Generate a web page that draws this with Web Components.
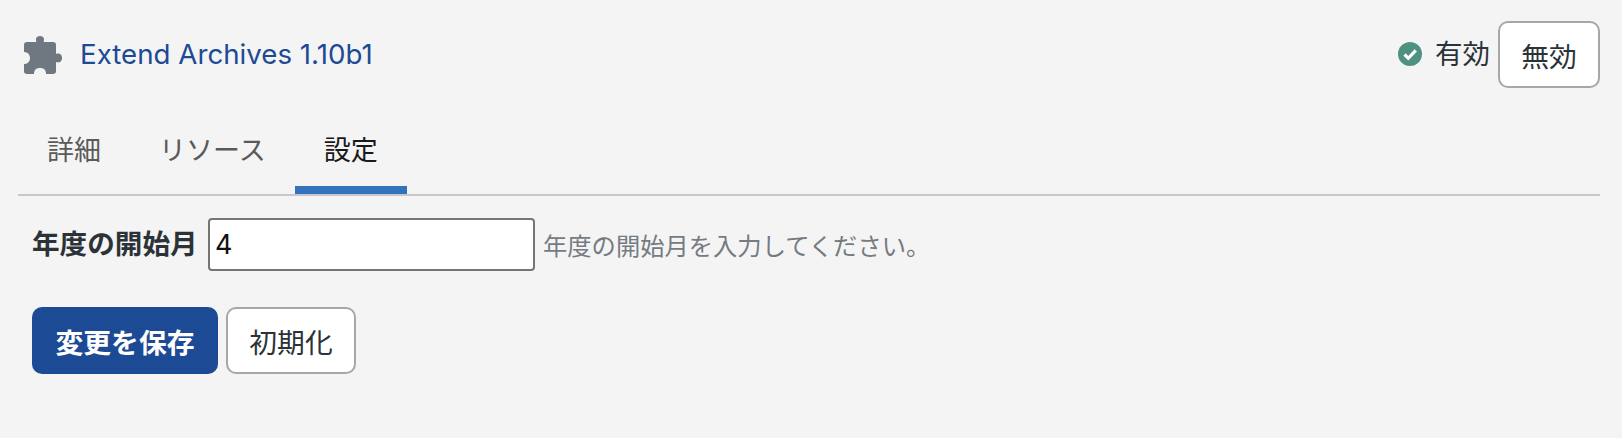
<!DOCTYPE html>
<html lang="ja">
<head>
<meta charset="utf-8">
<title>Extend Archives</title>
<style>
html,body{margin:0;padding:0;background:#f4f4f4;}
body{font-family:Inter,"Noto Sans CJK JP",sans-serif;font-size:27px;color:#2c3338;}
</style>
</head>
<body>
<plugin-page>
  <plugin-header slot="header" name="Extend Archives 1.10b1" status="有効" action="無効"></plugin-header>
  <plugin-tabs slot="tabs">
    <plugin-tab>詳細</plugin-tab>
    <plugin-tab>リソース</plugin-tab>
    <plugin-tab active>設定</plugin-tab>
  </plugin-tabs>
  <plugin-field slot="form" label="年度の開始月" value="4" hint="年度の開始月を入力してください。"></plugin-field>
  <div slot="actions" style="display:flex;gap:8px">
    <wp-button primary>変更を保存</wp-button>
    <wp-button style="width:130px">初期化</wp-button>
  </div>
</plugin-page>
<script>
class Base extends HTMLElement{
  render(html){ if(!this.shadowRoot) this.attachShadow({mode:'open'}); this.shadowRoot.innerHTML=html; }
}
customElements.define('wp-button',class extends Base{
  connectedCallback(){
    const p=this.hasAttribute('primary');
    this.render(`<style>
      :host{display:inline-flex;box-sizing:border-box;height:67px;${p?'width:186px;':''}}
      button{all:unset;box-sizing:border-box;width:100%;height:100%;display:flex;align-items:center;justify-content:center;
        border-radius:10px;font:${p?'700':'400'} 27.8px "Inter","Noto Sans CJK JP",sans-serif;
        background:${p?'#1d4a94':'#fff'};color:${p?'#fff':'#2c3338'};
        border:${p?'0':'2px solid #a7a7a7'};}
    </style><button><slot></slot></button>`);
  }
});
customElements.define('plugin-header',class extends Base{
  connectedCallback(){
    this.render(`<style>
      :host{display:flex;align-items:center;justify-content:space-between;height:67px;}
      .left{display:flex;align-items:center;gap:18px;color:#1d4a94;font-size:27.7px;}
      .left span{padding-bottom:2px}
      .right{display:flex;align-items:center;color:#2c3338;font-size:27.5px;}
      .check{margin-right:13px;display:block;margin-bottom:2px}
      .st{margin-right:8px;padding-bottom:6px}
      wp-button{width:102px;height:67px}
      svg{display:block}
    </style>
    <div class="left">
      <svg width="38" height="38" viewBox="0 0 38 38" aria-hidden="true">
        <path fill="#6f7780" d="M3 6H12.500C11.500 4 11.500 0 16 0C20.500 0 20.500 4 19.500 6H29Q32 6 32 9V18C34 17 38 17.500 38 22C38 26.500 34 27 32 26V35Q32 38 29 38H22C22 34 20 32 16 32C12 32 10 34 10 38H3Q0 38 0 35V28C3 28 6 26 6 22C6 18 3 16 0 16V9Q0 6 3 6Z"/>
      </svg>
      <span>${this.getAttribute('name')}</span>
    </div>
    <div class="right">
      <svg class="check" width="24" height="24" viewBox="0 0 24 24" aria-hidden="true">
        <circle cx="12" cy="12" r="12" fill="#4f9181"/>
        <path d="M6.500 12.500l3.800 3.800 7.500-8" fill="none" stroke="#fff" stroke-width="3.200"/>
      </svg>
      <span class="st">${this.getAttribute('status')}</span>
      <wp-button>${this.getAttribute('action')}</wp-button>
    </div>`);
  }
});
customElements.define('plugin-tab',class extends Base{
  connectedCallback(){
    const a=this.hasAttribute('active');
    this.render(`<style>
      :host{box-sizing:border-box;height:87px;padding:25px 29px 0;display:flex;align-items:flex-start;
        color:${a?'#1a1a1a':'#5a5a5a'};font-size:27px;line-height:38px;
        border-bottom:8px solid ${a?'#3373bb':'transparent'};margin-bottom:-2px}
    </style><slot></slot>`);
  }
});
customElements.define('plugin-tabs',class extends Base{
  connectedCallback(){
    this.render(`<style>
      :host{display:flex;border-bottom:2px solid #c8c8c8;margin-top:19px;height:87px;box-sizing:content-box}
    </style><slot></slot>`);
  }
});
customElements.define('plugin-field',class extends Base{
  connectedCallback(){
    this.render(`<style>
      :host{display:flex;align-items:center;height:53px;padding-left:14px;}
      label{font-weight:700;font-size:27.6px;line-height:53px;width:176px;color:#2c3338;white-space:nowrap}
      input{box-sizing:border-box;width:327px;height:53px;border:2px solid #757575;border-radius:4px;background:#fff;
        padding:0 5px;margin:0;font:27px Inter,"Noto Sans CJK JP",sans-serif;color:#111;outline:0}
      span{margin-left:8px;font-size:24.3px;color:#757b80;white-space:nowrap}
    </style>
    <label>${this.getAttribute('label')}</label>
    <input value="${this.getAttribute('value')}">
    <span>${this.getAttribute('hint')}</span>`);
  }
});
customElements.define('plugin-page',class extends Base{
  connectedCallback(){
    this.render(`<style>
      :host{display:block;box-sizing:border-box;width:1622px;height:438px;padding:21px 22px 0 18px;}
      .head{padding-left:6px;display:block}
      .form{margin-top:22px}
      .actions{margin-top:36px;padding-left:14px}
    </style>
    <div class="head"><slot name="header"></slot></div>
    <slot name="tabs"></slot>
    <div class="form"><slot name="form"></slot></div>
    <div class="actions"><slot name="actions"></slot></div>`);
  }
});
</script>
</body>
</html>
